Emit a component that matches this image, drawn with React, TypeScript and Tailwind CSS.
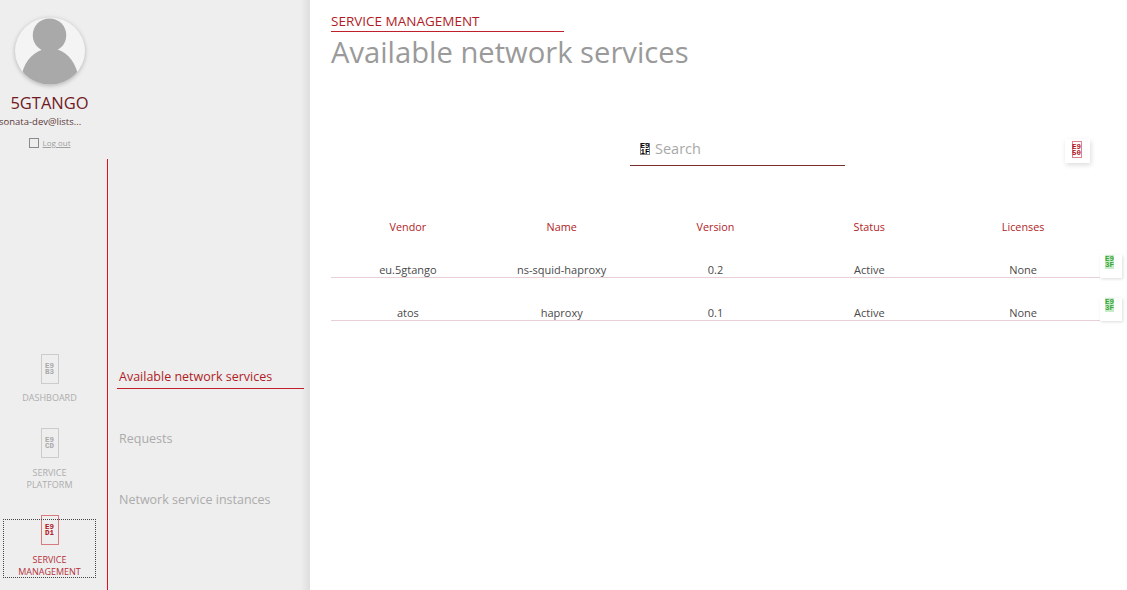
function Tofu({ a, b, cls }: { a: string; b: string; cls: string }) {
  return (
    <span className={`flex flex-col items-center justify-center font-['Liberation_Mono',monospace] text-[7.5px] leading-[6px] font-bold ${cls}`}>
      <span>{a}</span>
      <span>{b}</span>
    </span>
  );
}

function NavItem({ code, lines, active, gap }: { code: string; lines: string[]; active?: boolean; gap: string }) {
  return (
    <div className={`flex flex-col items-center ${active ? "text-[#b5303a]" : "text-[#adadad]"}`}>
      <Tofu a="E9" b={code} cls={`h-[30px] w-[18px] border ${active ? "border-[#d97a7f] text-[#b01020]" : "border-[#cccccc] text-[#a8a8a8]"}`} />
      <div className={`${gap} text-center text-[9px] leading-[12px]`}>
        {lines.map((l) => (
          <div key={l}>{l}</div>
        ))}
      </div>
    </div>
  );
}

const rows = [
  ["eu.5gtango", "ns-squid-haproxy", "0.2", "Active", "None"],
  ["atos", "haproxy", "0.1", "Active", "None"],
];

export default function App() {
  return (
    <div className="flex h-[590px] w-[1127px] overflow-hidden bg-white font-['Open_Sans',sans-serif]">
      <aside className="relative flex w-[310px] shrink-0 flex-col bg-gradient-to-r from-[#eeeeee] from-[97%] to-[#dedede]">
        <div className="flex h-[159px] w-[99px] shrink-0 flex-col items-center pt-[17px]">
          <svg width="70" height="68" viewBox="0 0 71 68" className="ml-[1px] shrink-0 drop-shadow-[0_1px_2px_rgba(0,0,0,0.25)]">
            <defs>
              <clipPath id="av">
                <ellipse cx="35.5" cy="34" rx="35.5" ry="34" />
              </clipPath>
            </defs>
            <ellipse cx="35.5" cy="34" rx="35.5" ry="34" fill="#f4f4f4" />
            <g clipPath="url(#av)" fill="#a9a9a9">
              <circle cx="35" cy="18" r="17" />
              <path d="M7 58 C10 42 22 33 31 32 Q35 36 40 32 C50 33 60 42 64 58 L64 70 L7 70 Z" />
            </g>
          </svg>
          <div className="mt-[8px] text-[16.5px] leading-[20px] text-[#701a1e]">5GTANGO</div>
          <div className="mt-[2px] w-[99px] overflow-hidden whitespace-nowrap text-[9.5px] leading-[14px] text-[#5c3a3a]">
            <span className="ml-[-1px]">sonata-dev@lists...</span>
          </div>
          <div className="mt-[9px] flex items-center gap-[4px]">
            <span className="h-[10px] w-[10px] border border-[#8a8a8a]" />
            <span className="text-[8px] leading-[10px] text-[#a0a0a0] underline">Log out</span>
          </div>
        </div>
        <div className="flex min-h-0 flex-1">
          <div className="flex w-[107px] shrink-0 flex-col justify-end pb-[12px]">
            <div className="w-[99px]">
              <NavItem code="B3" gap="mt-[8px]" lines={["DASHBOARD"]} />
            </div>
            <div className="mt-[24px] w-[99px]">
              <NavItem code="CD" gap="mt-[9px]" lines={["SERVICE", "PLATFORM"]} />
            </div>
            <div className="relative mt-[24px] w-[99px]">
              <div className="absolute left-[3px] right-[3px] top-[4px] bottom-0 border border-dotted border-[#444444]" />
              <NavItem code="D1" gap="mt-[9px]" active lines={["SERVICE", "MANAGEMENT"]} />
            </div>
          </div>
          <nav className="w-[197px] border-l border-[#e0101e] pl-[9px] pt-[209px] text-[12.5px]">
            <div className="w-[187px] border-b border-[#c0202c] pb-[2px] pl-[2px] leading-[18px] text-[#b01c26]">Available network services</div>
            <div className="mt-[41px] pl-[2px] leading-[18px] text-[#ababab]">Requests</div>
            <div className="mt-[43px] pl-[2px] leading-[18px] text-[#ababab]">Network service instances</div>
          </nav>
        </div>
      </aside>

      <main className="min-w-0 flex-1 pl-[21px] pt-[12px]">
        <div className="w-[233px] border-b border-[#c0202c] pb-[1px] text-[13.5px] leading-[18px] text-[#b01c26]">SERVICE MANAGEMENT</div>
        <h1 className="mt-[1px] text-[29.2px] leading-[38px] text-[#9a9a9a]">Available network services</h1>

        <div className="relative mt-[57px] h-[38px] w-[769px]">
          <div className="ml-[299px] flex h-[38px] w-[215px] items-center gap-[5px] border-b border-[#7a2c2c] pl-[10px] pt-[5px]">
            <Tofu a="E9" b="1F" cls="h-[12px] w-[10px] border border-[#888888] text-black" />
            <span className="text-[14.5px] text-[#a8a8a8]">Search</span>
          </div>
          <div className="absolute left-[734px] top-[11px] flex h-[24px] w-[25px] items-start justify-center bg-white pr-[2px] shadow-[1px_2px_5px_rgba(0,0,0,0.14)]">
            <Tofu a="E9" b="50" cls="mt-[2px] h-[17px] w-[10px] border border-[#e0808a] text-[#b01020]" />
          </div>
        </div>

        <div className="mt-[53px] w-[769px]">
          <div className="grid grid-cols-5 text-center text-[10.8px] leading-[16px] text-[#b01c26]">
            {["Vendor", "Name", "Version", "Status", "Licenses"].map((h) => (
              <div key={h}>{h}</div>
            ))}
          </div>
          <div className="mt-[26px] flex flex-col gap-[26px]">
            {rows.map((r) => (
              <div key={r[0]} className="relative h-[17px] border-b border-[#e8d0d6]">
                <div className="grid grid-cols-5 pt-[1px] text-center text-[11px] leading-[16px] text-[#4a4a4a]">
                  {r.map((c, i) => (
                    <div key={i}>{c}</div>
                  ))}
                </div>
                <div className="absolute left-[769px] bottom-[-1px] flex h-[23px] w-[22px] justify-start bg-white pl-[5px] shadow-[1px_1px_3px_rgba(0,0,0,0.14)]">
                  <Tofu a="E9" b="3F" cls="h-[14px] w-[9px] bg-[#c8ecc8] text-[#3aa53a]" />
                </div>
              </div>
            ))}
          </div>
        </div>
      </main>
    </div>
  );
}
